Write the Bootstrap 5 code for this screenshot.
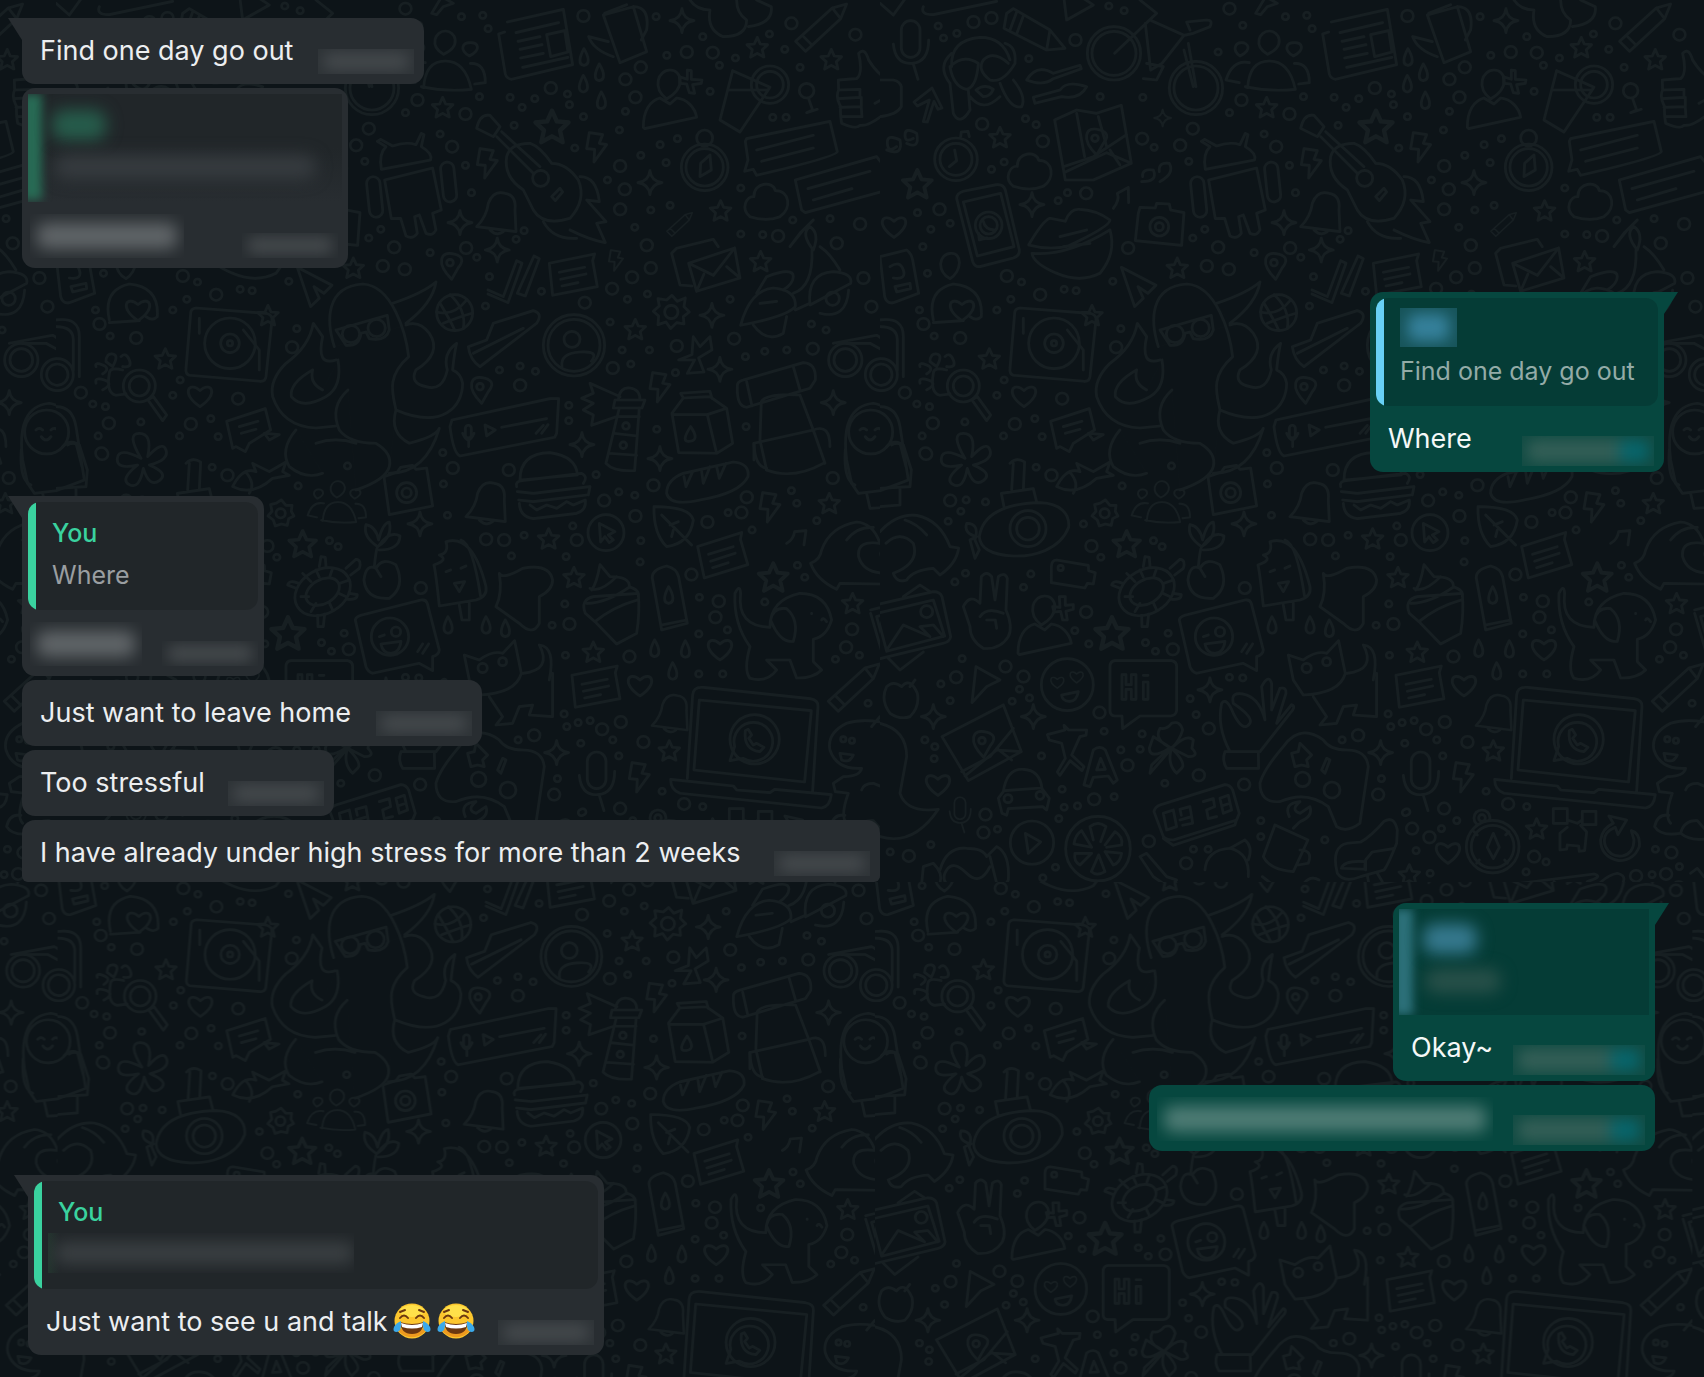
<!DOCTYPE html>
<html lang="en" data-bs-theme="dark">
<head>
<meta charset="utf-8">
<meta name="viewport" content="width=device-width, initial-scale=1">
<title>Chat</title>
<link href="https://cdn.jsdelivr.net/npm/bootstrap@5.3.0/dist/css/bootstrap.min.css" rel="stylesheet">
<style>
:root{--wall:#0d1418;--line:#171f22;--in:#282d31;--in-quote:#212629;--out:#06473f;--out-quote:#053c36}
body{background:var(--wall);font-family:Inter,"Liberation Sans",sans-serif;font-size:27px;line-height:38px;color:#eceef0}
.chat{min-height:100vh;padding:18px 40px 23px 22px}
.wallpaper{position:absolute;inset:0;width:100%;height:100%;z-index:-1}
.doodle{fill:none;stroke:var(--line);stroke-width:8;stroke-linecap:round;stroke-linejoin:round}
.solid{fill:var(--wall)}
.thread{gap:4px}
.thread + .thread{margin-top:24px}
.bubble{position:relative;border-radius:13px;background:var(--in);width:fit-content}
.bubble.sent{background:var(--out);color:#f4f8f7}
.bubble.tail::before{content:"";position:absolute;top:0;left:-14px;width:28px;height:22px;background:inherit;clip-path:polygon(0 0,100% 0,100% 100%,50% 100%)}
.bubble.sent.tail::before{left:auto;right:-14px;clip-path:polygon(0 0,100% 0,50% 100%,0 100%)}
.line{padding:10px 10px 10px 18px;min-height:66px;gap:20px}
.line p{margin:0 0 4px;white-space:nowrap}
.quoted{position:relative;padding:6px 6px 0}
.quoted blockquote{--bar:#3ad29f;margin:0;border-radius:12px;background:linear-gradient(90deg,var(--bar) 8px,var(--in-quote) 8px);height:108px;padding:10px 16px 14px 24px;font-size:25px;line-height:42px;white-space:nowrap;color:#9a9ea1;overflow:hidden}
.sent .quoted blockquote{--bar:#68d0f5;background:linear-gradient(90deg,var(--bar) 8px,var(--out-quote) 8px);color:#93aba7}
.who{color:#3ad29f;font-weight:500}
.smudge{display:block;position:relative;overflow:hidden;flex:none}
.smudge::before{content:"";position:absolute;inset:4px 5px;background:#44494c;filter:blur(7px);border-radius:8px}
.stamp{width:96px;height:25px;background:#2e3337}
.sent .stamp{width:132px;height:30px;margin-bottom:-4px;background:#114b43}
.sent .stamp::before{background:linear-gradient(90deg,#335e56 72%,#08656b 80%)}
.words{height:44px}
.words::before{inset:9px 7px;background:#606568;filter:blur(8px)}
.sent .words::before{background:#4f7c75}
.faint{height:40px;margin-left:-10px;background:linear-gradient(90deg,#24352f,var(--in-quote) 12px)}
.faint::before{background:#3a3f42;right:0}
.name-tag{width:57px;height:39px;margin-bottom:3px;background:#17545a}
.name-tag::before{background:#35809a;inset:6px 8px;filter:blur(7px)}
.gone{position:relative;overflow:hidden;height:108px;background:linear-gradient(var(--in-quote) 50%,var(--in))}
.sent .gone{height:106px;background:var(--out-quote)}
.gone::before{content:"";position:absolute;left:-6px;top:0;width:20px;height:106px;background:#286b55;filter:blur(5px)}
.sent .gone::before{background:#2c7079}
.gone-name{width:54px;height:30px;margin:16px 0 0 24px;background:#265c4b;filter:blur(8px);border-radius:12px}
.sent .gone-name{background:#35788d;margin-top:15px}
.gone-text{height:24px;margin:15px 26px 0 26px;background:#363b3f;filter:blur(8px);border-radius:12px}
.sent .gone-text{width:76px;background:#285049}
.face{width:40px;height:38px;vertical-align:-9px;margin-left:4px}
.cut{border-radius:13px 13px 6px 6px}
.cut .line{min-height:62px;padding-bottom:6px}
.w-a{width:402px}.w-b{width:326px}.w-c{width:294px}.w-d{width:242px}.w-e{width:460px}.w-f{width:312px}.w-g{width:858px}.w-h{width:262px}.w-i{width:506px}.w-j{width:576px}
.thread.later{margin-top:21px;padding-right:9px}
.thread.last{padding-left:6px}
</style>
</head>
<body>
<svg class="wallpaper" aria-hidden="true">
<defs>
<path id="star" d="M0-30 9-10 31-8 15 7 20 29 0 18-20 29-15 7-31-8-9-10Z"/>
<path id="spark" d="M0-36Q4-4 36 0Q4 4 0 36Q-4 4-36 0Q-4-4 0-36Z"/>
<path id="drop" d="M0-26C16 0 18 22 0 24C-18 22-14 0 0-26Z"/>
<path id="bolt" d="M-22-42 18-36 8-10 30-6-8 46-6 8-30 6Z"/>
<path id="heart" d="M0 30C-60-10-32-48 0-18C32-48 60-10 0 30Z"/>
<path id="cloud" d="M-50 44C-80 20-60-18-38-16C-40-60 20-64 26-34C70-34 76 20 40 44Q0 60-50 44Z"/>
<g id="people"><path d="M-65 55Q-60-25 0-25T78 60Q0 68-72 52ZM-5-45C-50-70-30-115 0-115S50-70-5-45ZM72-40C40-60 52-80 75-80S110-60 72-40ZM-88-40C-115-60-100-80-83-80S-48-60-88-40ZM75-18Q120-20 120 40L88 44M-60-20Q-110-30-130 32L-90 40"/></g>
<g id="person"><path d="M-10-25C-55-60-35-112 0-112S50-60-10-25ZM-80 60C-80 10-60-20-30-28L0-10 20-28C50-25 75 0 80 30L-76 64Z"/></g>
<g id="camera"><path d="M-68-48-28-62-18-76 18-82 28-70 60-74 78 40-52 66Z"/><circle r="30"/><circle r="14"/></g>
<g id="pin"><path d="M5 40Q-30 5-25-20T15-35T25 5Z"/><circle r="10" cy="-10"/></g>
<g id="bell"><path d="M-60 50Q-30 20-25-20Q-10-60 25-50Q60-45 55 0L58 65ZM-20 60Q0 80 20 65"/></g>
<g id="note"><path d="M-68-42 68-70 62-50 76 28-58 54ZM-38-15 38-30M-34 6 42-10M-30 26 18 16"/></g>
<g id="mic"><rect x="-28" y="-80" width="56" height="110" rx="28"/><path d="M-52-10Q-46 52 4 48T54-22M8 50 22 96"/></g>
<g id="crayon"><path d="M-75 40 35-60 78-72 60-28-45 70ZM-55 22-25 52M35-60 60-28"/></g>
<g id="paper"><path d="M-88-80 80-118 108 48-75 92Q-90 90-94 76L-114-44-96-50M-62-48 66-78M-56-22 10-36M-50 2 16-12M-48 28 20 14M-42 56 94 26M30-42 84-54 94 10 42 24Z"/></g>
<path id="beads" d="M174 78h1M190 114h1M230 100h1M446 176h1M732 32h1M686 18h1M1088 76h1M1014 156h1M788 292h1M660 290h1M1048 338h1M436 356h1M468 374h1M822 442h1M926 484h1M334 508h1M372 486h1M562 578h1M534 602h1M112 638h1M210 670h1M152 688h1M974 688h1M938 714h1M128 740h1M142 820h1M424 846h1M552 868h1M588 872h1M698 844h1M392 898h1M118 930h1M162 1008h1M350 930h1M722 986h1M372 1140h1M350 1186h1M110 1212h1M148 1220h1M254 1266h1M464 1256h1M486 1310h1M370 1308h1M126 1308h1M1216 50h1M1280 46h1M1296 86h1M1270 290h1M1362 292h1M1436 296h1M1398 322h1M1374 376h1M1152 402h1M1228 496h1M1246 578h1M1404 692h1M1380 718h1M1122 758h1M1262 772h1M1300 830h1M1288 918h1M1392 1098h1M1438 1114h1M1330 1110h1M1534 282h1M1540 314h1M1582 350h1M1556 444h1M1654 540h1M1690 390h1M1708 334h1M1800 50h1M1832 166h1M1940 110h1M1990 196h1M1962 274h1M2038 174h1M2140 102h1M2186 148h1M2232 202h1M2150 352h1M2190 352h1M1812 434h1M1754 466h1M1864 416h1M1830 488h1M1784 630h1M1842 616h1M1736 682h1M2054 564h1M2054 702h1M2120 704h1M2210 660h1M2322 656h1M1456 874h1M1714 898h1M1774 882h1M1662 966h1M1698 1050h1M1780 1050h1M2022 898h1M2266 972h1M2310 990h1M2126 1054h1M2192 1050h1M2068 1070h1M1858 1118h1M1724 1092h1M1538 1216h1M1538 1262h1M1802 1288h1M2070 1280h1M468 1402h1M726 1458h1M874 1398h1M258 1500h1M316 1506h1M204 1564h1M610 1572h1M242 1534h1M662 1672h1M846 1640h1M820 1622h1M256 1720h1M224 1746h1M452 1722h1M430 1762h1M584 1892h1M864 1900h1M796 1928h1M826 1954h1M626 1932h1M246 1976h1M182 2052h1M210 2102h1M396 2104h1M448 2094h1M418 2068h1M134 2220h1M164 2240h1M162 2276h1M672 2194h1M722 2250h1M786 2202h1M780 2248h1M484 2268h1M948 2144h1M930 2096h1M1048 2032h1M1088 2034h1M1386 2220h1M552 2422h1M592 2418h1M702 2390h1M546 2368h1M536 2456h1M352 2488h1M854 2350h1M1142 2462h1M152 2534h1M30 2556h1M526 2602h1M488 2634h1M684 2674h1M940 2548h1M984 2548h1M1162 1452h1M1174 1546h1M1404 1606h1M1366 1668h1M1160 1358h1M1620 1424h1M1688 1476h1M1736 1486h1M1550 1578h1M1530 1670h1M1754 1622h1M1752 1686h1M1526 1812h1M1488 1876h1M1930 1792h1M1928 1902h1M2014 1890h1M2126 1806h1M2206 1472h1M2222 1510h1M2016 1538h1M2088 1590h1M2282 1562h1M2246 1732h1M2224 1696h1M1528 1966h1M1928 2022h1M2000 2022h1M2338 1978h1M2410 1966h1M2436 2110h1M1532 2180h1M1566 2168h1M1602 2162h1M1524 2142h1M1670 2220h1M1574 2230h1M1688 2268h1M1496 2384h1M1576 2438h1M1818 2374h1M1504 2336h1M1580 2436h1M1684 2486h1M1334 2520h1M1142 2510h1M1608 2552h1M1730 2462h1M1998 2586h1M1938 2616h1M1650 2620h1M2326 2548h1M2398 2600h1M2316 2624h1M1940 2420h1M1280 2660h1M1440 2700h1"/>
<path id="pearls" d="M280 66h1M334 54h1M586 120h1M1048 26h1M1084 300h1M1228 342h1M938 386h1M786 416h1M900 436h1M1188 440h1M306 372h1M488 424h1M178 628h1M618 580h1M1014 742h1M744 744h1M1230 744h1M380 828h1M480 884h1M980 798h1M1046 808h1M130 972h1M240 1014h1M708 1042h1M74 1178h1M546 1196h1M158 1270h1M404 1272h1M1392 1156h1M136 1360h1M1484 264h1M1582 48h1M1754 202h1M1708 238h1M1738 292h1M1892 156h1M1970 158h1M2206 70h1M2398 104h1M1692 498h1M1706 568h1M1692 628h1M1772 736h1M1784 804h1M1668 866h1M1728 832h1M1586 908h1M2166 708h1M2342 730h1M2412 672h1M2422 834h1M2446 920h1M1862 1038h1M2034 1016h1M2270 1046h1M1670 1104h1M210 1502h1M138 1362h1M514 1426h1M634 1638h1M618 1836h1M1094 1764h1M878 1948h1M376 2000h1M228 2032h1M430 2030h1M658 2138h1M742 2296h1M986 2186h1M956 2326h1M1092 2354h1M642 2398h1M310 2498h1M316 2444h1M86 2568h1M806 2524h1M918 2590h1M1190 1404h1M1358 1410h1M1290 1618h1M1344 1620h1M1644 1502h1M1738 1548h1M1562 1620h1M1792 1456h1M2330 1434h1M2056 1538h1M2072 1492h1M1954 1566h1M1906 1724h1M1988 1804h1M1978 1852h1M1540 1872h1M1720 1970h1M2388 1888h1M2370 1942h1M1694 2166h1M1638 2188h1M1762 2226h1M1434 2206h1M1494 2384h1M1692 2426h1M1884 2412h1M1596 2486h1M1648 2512h1M1962 2570h1M2374 2558h1M2268 2628h1M2358 2622h1M2396 2662h1M1648 2690h1"/>

<pattern id="tile" x="56" width="824" height="900" patternUnits="userSpaceOnUse">
<g class="doodle" transform="translate(-56)">
<!-- upper half, first part -->
<g transform="translate(56) scale(.3333)">
<path d="M130 20Q120 45 160 44L350 4M550-20 560 60 640 15 600-12M0 10 40 45 80-10M-30 240H40Q60 244 64 260V320Q50 345 0 350"/>
<use href="#mic" x="92" y="142"/>
<path d="M380 40 400 26 510 90 555 145 500 150 372 85ZM410 36 390 90M430 48 410 102M510 90 500 150"/>
<path d="M215 200Q210 120 300 112Q370 112 390 180M215 160Q170 200 210 250L220 340Q240 380 270 330L265 270M375 130Q410 140 405 190Q370 250 330 240Q290 210 310 180Q340 150 385 190M400 240Q440 290 425 320Q390 330 360 250M210 200Q250 160 295 190Q290 260 260 268Q220 260 210 200M270 290Q310 340 360 290M288 270Q315 250 340 268Q330 290 310 290Z"/>
<path d="M440 240Q470 190 520 220L600 196 604 206 520 236Q490 260 440 240ZM460 292 540 270Q560 240 620 260Q600 300 545 290L465 310Z"/>
<circle cx="702" cy="160" r="80"/><circle cx="702" cy="160" r="66"/><circle cx="948" cy="264" r="80"/><circle cx="948" cy="264" r="66"/>
<path d="M704 160 830 40 780 0M810 60 912 106 940 100 990 80Q1000 60 980 60L920 66 930 90M912 106 846 190 812 210 796 70M925 130 948 260M912 150 940 260M800 190 850 200 830 240 790 236"/>
<path d="M130 365 148 300 112 318 102 306 156 264 186 324 174 328 162 304 142 366ZM20 450Q70 470 60 420Q20 400 22 430T50 440M80 430Q120 450 110 400Q75 380 75 405T100 415M785 545Q835 545 820 510Q785 505 788 530M840 545Q885 520 868 490Q835 485 838 515"/>
<circle cx="228" cy="478" r="64"/><circle cx="228" cy="478" r="48"/><path d="M224 450 230 482 208 500M242 410 244 396 264 394 268 410"/>
<use href="#cloud" x="450" y="515"/><path d="M524 360 590 330 650 340 724 316 754 490 640 540 556 540ZM550 500 640 470 740 404M556 516 680 458 754 490M690 450 720 495M590 340 614 470M655 350 680 440"/><use href="#pin" x="645" y="425"/>
<path d="M230 596Q230 580 250 574L350 554Q370 552 376 570L418 750Q420 768 400 774L300 800Q284 802 278 784ZM250 606 362 580 402 740 292 768Z"/><circle cx="326" cy="676" r="40"/><circle cx="326" cy="676" r="26"/><path d="M296 700 298 720 320 714M310 664Q315 690 345 690"/>
<path d="M446 735Q490 660 510 655L556 664Q570 625 600 628Q650 630 690 660Q690 680 560 740Q500 750 446 735ZM456 760Q560 770 690 690Q710 760 660 820Q600 850 530 820Q460 790 456 760ZM540 710 620 690M550 740 630 730"/>
<path d="M775 640 780 622 826 624 830 610 868 612 872 630 912 638 905 736 766 722Z"/><circle cx="838" cy="680" r="28"/><circle cx="838" cy="680" r="12"/>
<path d="M700 625Q720 600 712 580L745 562 746 608M976 508Q968 460 990 440L964 424 974 418 1010 438Q1050 424 1080 434L1096 400 1104 404 1096 440Q1130 460 1124 480ZM986 540 1130 504 1156 630 1130 640 1140 690Q1130 710 1110 700L1090 645 1076 650 1084 700Q1070 720 1050 708L1034 655 1006 656Z"/><rect x="936" y="530" width="40" height="122" rx="20" transform="rotate(-6 956 590)"/><rect x="1158" y="486" width="40" height="120" rx="20" transform="rotate(-6 1178 546)"/>
<path d="M0 770 80 750Q94 760 98 780L116 880 40 908Q20 912 14 890ZM30 800Q60 780 70 810T40 834M45 860 90 850 92 866 50 876ZM210 836C170 815 175 762 212 760S245 815 210 836ZM160 960Q140 870 220 852Q310 860 304 950Q290 965 270 950M160 968 250 962"/><use href="#heart" x="246" y="932"/>
<path d="M724 802 828 856 804 880 774 860 790 895 764 920ZM404 940Q404 926 420 924L630 940Q650 945 648 960L630 1130Q628 1145 612 1144L400 1126Q388 1122 390 1106Z"/><circle cx="522" cy="1030" r="76"/><circle cx="522" cy="1030" r="28"/><circle cx="522" cy="1030" r="8"/><path d="M562 990 610 1050 610 1110M430 955V1000"/>
<path class="solid" d="M835 1040C810 960 810 860 920 852C1010 856 1050 1000 1058 1070C990 1130 1010 1180 1020 1230C1160 1290 1220 1220 1220 1150Q1215 1120 1190 1110Q1195 1060 1202 1030Q1160 1060 1174 1110Q1160 1175 1110 1160Q1060 1150 1080 1110Q1160 1060 1120 1000Q1090 960 1050 975M1010 910Q1100 880 1140 846Q1130 910 1050 970M846 1080Q860 1160 810 1190Q740 1230 706 1190Q700 1150 770 1110Q760 1150 800 1170M840 1080Q780 1100 800 1010L772 970Q760 1040 690 1090Q640 1140 650 1190Q680 1280 780 1284L840 1278M876 1170Q820 1220 850 1290Q880 1330 960 1330Q1010 1360 1000 1400Q990 1440 900 1470M1020 1230Q1000 1300 1060 1330Q1140 1310 1150 1285Q1110 1420 1000 1420M720 1290Q670 1350 700 1400Q750 1440 800 1420M780 1330Q840 1310 900 1330"/>
<path d="M840 990 994 946 1000 990Q990 1026 940 1016L930 996 915 1000Q910 1040 870 1036Z"/><circle cx="885" cy="1002" r="26"/><circle cx="962" cy="984" r="26"/>
<path d="M0 960Q70 950 70 1010V1130M0 980Q52 980 52 1020V1110M0 1220Q50 1220 60 1280L85 1440 -20 1480M20 1340Q40 1320 60 1330L78 1400"/>
<circle cx="4" cy="1124" r="48"/><circle cx="4" cy="1124" r="32"/><circle cx="-28" cy="1296" r="66"/>
<circle cx="250" cy="1158" r="48"/><circle cx="250" cy="1158" r="30"/><path d="M276 1200 292 1190 332 1245 320 1262ZM200 1110Q160 1100 160 1120Q150 1180 180 1186L210 1182M150 1085Q150 1060 170 1062T170 1100ZM195 1070Q210 1055 220 1080T200 1100M120 1100Q115 1085 140 1095T140 1122M120 1150Q115 1130 145 1140T140 1170"/>
<use href="#heart" x="432" y="1190"/><path d="M512 1264 628 1226 644 1290 580 1330 568 1355 540 1340 530 1345ZM550 1280 606 1264M556 1300 600 1288M625 1300 670 1304 640 1320Z"/>
</g>
<!-- upper half, second part -->
<g transform="translate(400) scale(.3333)">
<path d="M95 40 125-10 160 10 130 20 110 44Z"/>
<use href="#people" x="136" y="208"/><use href="#paper" x="410" y="146"/>
<path d="M610 45 700 20 740 155 660 188ZM700 20Q750 20 740 90L724 120M625 125 566 110Q580 150 640 170M614 40 680 14M870 0Q890 30 930 30Q920 90 970 110Q1040 110 1040 60Q1010 40 1010 0M1045 80Q1120 70 1114 20L1070 0"/>
<use href="#crayon" x="1262" y="84"/><use href="#crayon" transform="translate(838 674) scale(.5)"/>
<path d="M1315 240Q1320 240 1370 236Q1390 220 1376 160Q1394 140 1406 180Q1430 220 1465 240L1466 330Q1410 380 1380 376Q1370 390 1325 370Q1320 340 1322 320Q1306 290 1316 270ZM1316 270 1380 268 1380 292 1316 296M1384 292V320L1320 322M1384 322 1386 350 1326 350M1425 310 1460 290M1466 240H1500M1466 330 1500 340"/>
<use href="#person" x="810" y="322"/><path d="M838 230 862 238 862 210 874 212 874 238 906 240 904 250 878 254 884 280 868 278 860 252 840 250ZM998 212 1110 262 1020 396 960 360ZM984 270H1102"/><circle cx="1110" cy="254" r="56"/><circle cx="1110" cy="254" r="40"/><circle cx="1220" cy="272" r="22"/><path d="M1226 296 1238 330 1220 338 1252 328"/>
<path d="M320 470Q310 530 370 570L400 630Q430 680 510 655Q560 600 535 540Q500 490 455 490Q420 440 390 430Q330 430 320 470ZM290 410 400 520M305 395 420 500M230 385Q240 340 270 346L300 380 280 410ZM455 590 480 565 488 576 466 602ZM540 530Q590 530 598 605L560 600 618 665 590 670 616 728Q570 720 510 690M430 665Q460 720 530 715"/><circle cx="422" cy="535" r="24"/>
<use href="#star" transform="translate(456 380) scale(1.6)"/><use href="#bolt" x="590" y="440"/><use href="#bolt" x="262" y="488"/>
<use href="#bell" x="290" y="630"/><circle cx="914" cy="502" r="70"/><circle cx="914" cy="502" r="56"/><circle cx="914" cy="414" r="24"/><path d="M930 465 934 510 900 530 902 490Z"/>
<path d="M1036 424 1040 416 1290 364 1312 455Q1310 470 1070 526L1060 508 1034 514 1044 480ZM1070 450 1240 406M1085 484 1240 444M1186 540 1430 470 1446 490 1454 524 1478 540 1456 552 1448 574 1216 638 1205 630ZM1224 566 1410 514M1240 600 1356 566"/>
<use href="#cloud" x="1100" y="606"/><path d="M815 760 830 745 940 718 955 740M815 760 840 855 876 858M866 790 1004 744 1020 834 890 874ZM866 790 940 826 1004 744M890 874 912 822M1020 834 980 800"/>
<use href="#note" x="516" y="832"/><path d="M264 870 310 890 350 782 366 790 324 908 264 882M352 880 402 768 418 776 376 888ZM1236 750Q1240 860 1180 880M1260 740Q1290 760 1320 810M1170 740 1200 700 1240 660 1210 690ZM1240 750Q1200 700 1230 680Q1260 700 1240 750ZM1022 976Q1050 870 1120 864Q1190 870 1186 920Q1160 950 1022 976ZM1070 880 1100 830Q1180 800 1180 830Q1180 850 1150 870M1230 915Q1220 820 1300 815Q1360 820 1352 850ZM1080 910 1130 904M1060 975Q1100 1030 1150 1000L1160 950M1260 940Q1340 960 1346 870M1186 930 1230 910"/><circle cx="1298" cy="896" r="20"/>
<use href="#bolt" transform="translate(648 780) scale(.7)"/><use href="#pin" x="150" y="798"/><use href="#pin" x="240" y="1170"/>
<circle cx="164" cy="938" r="54"/><path d="M110 936Q160 950 200 900M130 970Q180 950 216 940M150 884Q200 930 190 986M120 910Q150 960 164 990M205 1040 260 1020 280 970 400 932Q430 940 410 970L240 1100Q210 1080 205 1040ZM220 1060 370 985"/>
<circle cx="522" cy="1036" r="92"/><circle cx="522" cy="1036" r="78"/><circle cx="516" cy="1018" r="24"/><path d="M486 1100Q480 1060 540 1056T574 1084"/>
<path d="M800 900 816 886 832 904 856 894 852 920 868 936 850 950 852 972 830 968 812 986 798 966 774 974 776 948 760 934 778 918 774 896Z"/><circle cx="814" cy="936" r="20"/>
<path d="M836 1080 876 1064 880 1010 900 1040 930 1010 936 1050 896 1074 912 1116 862 1120 884 1080ZM1012 1160Q1010 1145 1030 1140L1210 1088Q1250 1090 1246 1140L1230 1165 1040 1222Q1010 1220 1012 1160ZM1040 1145 1056 1218M1180 1100 1200 1170M1080 1320 1084 1205Q1100 1180 1200 1185L1240 1290 1275 1390M1080 1320 1100 1410M1062 1380V1330L1240 1290Q1290 1270 1290 1340"/>
<circle cx="1336" cy="1080" r="50"/><circle cx="1336" cy="1080" r="34"/><circle cx="1444" cy="1124" r="48"/><circle cx="1444" cy="1124" r="32"/><path d="M1300 1030 1430 1006Q1460 1020 1466 1060L1410 1030 1340 1030"/>
<circle cx="1412" cy="1296" r="66"/><path d="M1355 1450 1340 1380Q1320 1220 1420 1210Q1480 1220 1500 1290M1380 1290Q1390 1280 1400 1290M1425 1290Q1435 1280 1445 1290M1396 1310Q1410 1330 1425 1310"/>
<path d="M150 1280 156 1260 450 1196 476 1196 470 1300 464 1312 180 1368Q160 1360 150 1280ZM255 1275 286 1290 260 1308ZM305 1282 440 1256M408 1300 430 1276M425 1300 444 1274"/><rect x="196" y="1276" width="18" height="38" rx="9"/><path d="M188 1300Q205 1340 222 1300M206 1320V1340"/>
<path d="M655 1200Q660 1160 690 1164T720 1200M645 1200H735L726 1224H640ZM658 1224 618 1390Q640 1415 704 1412L718 1224M650 1250H718M640 1300 712 1308M625 1360 710 1366M570 1150 660 1190M575 1276 655 1248M570 1150 580 1180 545 1195 580 1210 550 1230 580 1245 575 1276"/><use href="#bolt" x="780" y="1160"/><circle cx="678" cy="1278" r="10"/><circle cx="670" cy="1336" r="10"/>
<path d="M816 1240 850 1194 930 1190 980 1225 998 1330 950 1360 836 1358ZM816 1244H922L980 1225M922 1244 950 1360M850 1194 842 1180 930 1174 936 1195M872 1280Q900 1320 870 1324T872 1280"/>
</g>
<!-- lower half, first part -->
<g transform="translate(56 440) scale(.3333)">
<path d="M255 55Q210-20 250-20T275 50Q320 0 330 30T280 75Q340 100 310 122T262 85Q250 150 220 134T245 75Q180 90 184 55T255 55ZM35 15Q50 5 70 15L94 90 90 140 0 145M60 145V195L0 200M390 70Q410 50 434 66L430 150M400 70 395 150M364 160 460 146 470 186M364 160 372 200M298 290C310 210 400 190 480 188C540 190 570 220 566 262C540 330 460 350 400 348C340 345 300 330 298 290ZM290 290 270 300 285 355 298 330 285 300Q300 250 260 250Q250 280 290 290"/><circle cx="444" cy="266" r="54"/><circle cx="444" cy="266" r="34"/>
<path d="M530 140Q560 80 600 95L590 70 640 95 690 66 680 95 700 106 650 115Q590 170 530 140ZM568 95Q600 130 580 160"/>
<path d="M660 190 676 180 690 196 708 196 706 214 714 228 698 236 694 256 676 252 658 258 652 240 636 228 648 214 644 194Z"/><circle cx="674" cy="220" r="14"/><use href="#people" transform="translate(846 204) scale(.7)"/>
<use href="#camera" x="1052" y="158"/><use href="#bell" x="1290" y="180"/>
<path d="M0 275Q50 220 110 226Q180 240 210 320L236 324Q230 370 180 405L160 385Q100 390 80 420Q50 430 40 400Q120 370 100 310Q60 270 18 310M75 240Q110 250 140 285M514 380Q515 360 530 360L625 376 626 392 646 398 640 432 622 430 615 444 514 428Z"/><circle cx="542" cy="384" r="8"/>
<path d="M250 500Q270 460 300 490L304 410Q320 390 335 410L345 480 355 410Q375 395 382 415L378 510Q400 560 385 590Q360 630 310 625Q270 600 270 560ZM300 530Q320 500 370 520M320 540 346 540 350 565"/>
<use href="#person" x="494" y="580"/><path d="M518 500 540 502 538 470 556 470 556 496 580 494 580 508 558 514 562 540 548 540 542 514 522 516Z"/>
<g transform="rotate(-30 800 455)"><ellipse cx="800" cy="455" rx="88" ry="66"/><ellipse cx="800" cy="455" rx="54" ry="36"/></g><path d="M790 380 795 350 808 352 810 378M870 385 900 358Q918 360 910 385L884 405M720 445 695 435Q700 418 728 430M785 526 786 560 802 560 806 522M880 460 904 464Q904 480 876 478M740 400 765 425M735 470 758 470M765 515 780 490M830 510 820 488M870 470 848 460M880 420 852 430M830 385 822 408M780 390 790 412"/>
<path d="M960 385Q980 350 1020 375Q1050 440 1000 475Q930 480 924 420Q930 370 960 385L975 410M955 380Q960 330 965 320Q920 290 930 254Q960 260 968 300Q980 250 1000 246Q1010 290 968 318Q1000 270 1032 288Q1030 330 970 330"/>
<path d="M1170 305Q1250 280 1290 440Q1295 470 1260 480L1150 498Q1140 400 1134 375Q1180 360 1150 345Q1180 340 1170 305ZM1215 300Q1250 310 1274 470M1210 495 1218 540 1240 540 1240 490M1195 430 1226 425 1210 455ZM1170 395 1184 390M1215 385 1230 378M1330 400Q1340 420 1400 385Q1480 370 1490 420Q1490 450 1450 470L1450 550Q1430 590 1390 550L1320 500Q1340 460 1330 400Z"/>
<path d="M-10 494 160 455Q180 455 186 470L212 590Q210 605 190 610L0 656M-10 520 160 480 194 588 20 634ZM20 630 70 555 150 590 120 560 160 555 190 590M70 470 120 435 150 455M25 655 60 690 130 636"/><circle cx="140" cy="515" r="18"/>
<path d="M898 540Q900 530 915 526L1095 480Q1110 478 1114 490L1150 630Q1148 645 1130 650L1130 692 1090 670 950 700Q936 695 930 680Z"/><circle cx="1002" cy="590" r="56"/><circle cx="1020" cy="575" r="14"/><path d="M970 590 985 585M975 612 1035 604Q1030 640 1005 640T975 612ZM1085 635 1100 612M1100 640 1118 612"/>
<circle cx="562" cy="734" r="78"/><use href="#heart" transform="translate(532 728) scale(.55)"/><use href="#heart" transform="translate(590 712) scale(.55)"/><path d="M545 765 595 755Q590 785 568 784T545 765Z"/>
<path d="M704 662H874Q890 664 890 680V812Q888 826 872 828H780L728 866 726 828H704Q690 826 690 812V680Q690 664 704 662ZM726 704H738V734H754V704H768V778H754V748H738V778H726ZM790 726H804V778H790ZM790 706H804"/>
<path d="M65 740Q90 710 112 760Q120 800 90 830Q60 840 30 820Q0 780 20 740Q40 720 65 740ZM90 740 105 720M288 680 360 720 320 740 276 788ZM186 890 370 795 424 935 265 1022ZM245 995 330 950 400 865M255 1008 350 930 424 935M350 925 395 960"/><use href="#pin" x="306" y="912"/>
<path d="M502 884 555 870 552 856 566 870 620 870 618 886 600 890 575 945 612 980 606 992 570 962 540 1006 532 996 556 955 545 910 508 900ZM612 1035 640 930Q660 915 676 930L712 1020 700 1030 685 1008 640 1012 630 1040ZM650 990 676 988 662 955Z"/>
<path d="M875 925Q820 900 840 865Q860 870 875 850Q900 840 908 870Q900 900 875 925Q920 880 940 900L936 925Q960 950 925 950L875 925Q920 970 905 985L890 1000Q860 970 875 925L810 1000 815 975 868 925Q810 960 808 925L820 890Z"/>
<path d="M1050 935Q1010 860 1025 790Q1040 770 1060 820Q1090 880 1110 850Q1120 830 1060 790Q1050 750 1100 765Q1140 780 1155 840L1145 740Q1165 700 1175 730V810L1200 745Q1220 740 1218 760L1190 850 1235 794Q1250 800 1230 820L1140 935ZM1035 935H1135L1136 985H1040Q1025 960 1035 935Z"/>
<path d="M1225 645 1270 660Q1310 630 1340 640L1376 602 1396 700Q1380 760 1270 765L1240 720ZM1300 770 1340 830 1320 855 1370 850 1390 800 1430 795 1420 825 1490 830V700M1400 700Q1490 690 1450 615Q1500 620 1480 720"/><circle cx="1280" cy="684" r="14"/><circle cx="1340" cy="665" r="12"/>
<path d="M1140 1030Q1150 990 1210 920Q1260 850 1330 900Q1350 930 1400 930Q1460 930 1465 980L1440 1150Q1400 1180 1370 1160L1345 1100Q1280 1050 1200 1085Q1140 1090 1140 1030ZM1235 940 1255 935 1260 910 1280 930 1295 945 1280 960 1285 980 1265 975 1245 980ZM1325 990 1340 955 1350 960 1335 1000Z"/><circle cx="1268" cy="1018" r="22"/><circle cx="1356" cy="1050" r="24"/>
<path d="M0 850Q80 870 80 950L60 1060Q80 1120 175 1108Q100 1220 0 1190"/><use href="#heart" x="174" y="1036"/><use href="#mic" transform="translate(240 1120) scale(.6)"/>
<path d="M370 1055Q380 985 430 988Q480 990 486 1046L508 1075 500 1110 488 1100 385 1106 380 1126 366 1120 355 1075ZM374 1052 484 1044"/><circle cx="384" cy="1076" r="12"/><circle cx="480" cy="1066" r="12"/>
<circle cx="456" cy="1208" r="65"/><path d="M436 1180 482 1206 445 1240Z"/><circle cx="654" cy="1226" r="97"/><path d="M640 1200 630 1160Q654 1140 678 1160L662 1205M675 1215 705 1175Q730 1190 725 1215L680 1222M675 1235 725 1240Q720 1270 700 1275ZM656 1245 675 1295Q650 1310 634 1295ZM635 1240 600 1275Q580 1265 585 1240ZM635 1222 582 1212Q585 1185 605 1172Z"/>
<path d="M822 1115Q825 1100 840 1095L1035 1034Q1050 1034 1058 1050L1078 1120 1070 1140 880 1200Q860 1200 850 1190ZM850 1195 880 1216 1065 1155 1070 1138M850 1120 880 1110 890 1160 860 1170ZM900 1140 935 1130 930 1100 900 1108 904 1126M935 1130 938 1150 908 1156M970 1085 1000 1076 1004 1100 980 1110 985 1136 1010 1130M1020 1075 1045 1066 1055 1110 1030 1120ZM1025 1098 1050 1090"/>
<path d="M1228 1130Q1210 1090 1260 1085Q1230 1110 1260 1120L1290 1100Q1300 1130 1260 1145L1240 1165M1185 1155 1284 1200 1240 1295Q1170 1290 1150 1250ZM1260 1230Q1300 1230 1285 1270L1255 1275M975 1290Q980 1230 1050 1225Q1110 1240 1105 1310M1050 1225Q1060 1220 1095 1200Q1120 1220 1105 1260M780 1250 800 1240 860 1310 890 1320 870 1345 820 1310ZM125 1330 130 1280 160 1270Q190 1300 180 1330M180 1290Q200 1220 260 1225Q310 1225 320 1250L350 1220Q390 1240 385 1320L370 1345 350 1330 330 1250M210 1340Q180 1320 200 1290T260 1300T330 1280"/>
</g>
<!-- lower half, second part -->
<g transform="translate(400 440) scale(.3333)">
<path d="M360 120Q360 40 450 38Q530 50 532 105ZM350 140Q345 125 365 122L545 100Q565 110 550 130M352 155 400 160 570 140 565 165M356 180 400 185 560 165M358 190Q360 230 400 236L530 220Q560 210 556 180L520 195 500 185 470 205 440 195 410 210 390 195"/>
<path d="M800 160Q800 120 850 100L1000 66Q1050 70 1044 110Q1020 160 900 180Q810 200 800 160ZM852 110 858 140 878 95M905 95 910 130 930 80M950 80 958 115 978 70M1100 90Q1180 120 1270 70M1062 10Q1064 80 1100 85M1336 30Q1330 120 1365 135M1355 130 1375 160 1500 145M1400 160 1410 205 1500 200"/>
<circle cx="618" cy="278" r="54"/><path d="M598 250 645 275 625 285 640 300 628 308 615 290 602 306ZM762 200Q870 200 880 240Q870 310 800 320Q760 280 762 200ZM785 225 875 315M810 255 835 245M820 270 815 290"/><use href="#note" x="965" y="354" transform="rotate(-6 965 354)"/>
<use href="#bolt" x="1110" y="200"/><path d="M1160 310Q1180 300 1184 275L1218 272 1212 315M1232 370Q1260 360 1265 330Q1290 260 1370 246Q1420 250 1440 310Q1370 300 1376 350Q1390 400 1460 400Q1480 430 1440 432L1320 430 1310 448Q1250 420 1232 370ZM1340 300Q1370 260 1420 262"/><use href="#heart" transform="translate(1462 350) scale(.6)"/>
<path d="M580 470Q540 480 556 520L585 545 650 612 710 580Q720 520 715 460ZM585 545Q640 500 712 480M575 450Q590 430 600 374L630 410Q690 410 688 440Q720 450 715 470M570 445Q600 460 650 410M560 490Q620 490 690 440M758 420Q750 390 800 378Q830 385 836 410L862 550 785 570ZM785 555 860 540"/><use href="#drop" x="806" y="466"/>
<path d="M1005 460Q1020 430 1022 460Q1010 560 1110 562Q1110 480 1200 460Q1280 460 1295 540Q1280 590 1240 598L1240 665 1265 690Q1240 715 1190 714L1170 660 1100 660 1130 690Q1100 730 1050 715Q1030 690 1050 620Q1000 550 1005 460ZM1112 540Q1120 500 1160 506Q1200 540 1180 604Q1140 610 1112 540M1235 520V521M1265 540Q1270 530 1280 545"/>
<path d="M1412 510 1500 488M1412 520 1450 650 1500 665M1430 530 1500 510M1430 530 1460 640 1500 620"/>
<use href="#note" x="584" y="748"/><use href="#heart" x="720" y="738"/><use href="#heart" x="960" y="630"/><use href="#bell" transform="translate(810 812) scale(.9)"/>
<path d="M878 765Q880 740 910 742L1230 776Q1256 780 1254 800L1238 1054M878 765 862 1015M898 780 1234 812 1214 1026 882 990ZM812 1018 1000 1038 1010 1050 1110 1058 1124 1048 1294 1064Q1290 1100 1265 1104L840 1060Q812 1050 812 1018Z"/><circle cx="1064" cy="898" r="74"/><path d="M1004 920 990 962 1030 955A58 58 0 1 0 1004 920ZM1036 872Q1030 930 1080 935L1092 922 1070 910 1060 915 1046 895 1055 885 1045 868Z"/>
<use href="#crayon" x="1360" y="744"/><path d="M1500 860Q1400 830 1340 850Q1280 880 1290 930Q1310 990 1385 985Q1380 1010 1330 1010L1300 1030 1306 1055 1345 1060Q1320 1130 1340 1150M1385 1050Q1390 1030 1420 1030L1470 1050M1320 940 1360 945Q1350 970 1325 960ZM1415 860 1440 830 1460 860 1480 850"/><circle cx="1330" cy="898" r="8"/><circle cx="1356" cy="902" r="8"/>
<use href="#mic" x="590" y="1016"/><use href="#bolt" x="718" y="1010"/>
<g transform="translate(0 900)"><circle cx="774" cy="234" r="24"/><circle cx="774" cy="234" r="10"/><circle class="solid" cx="806" cy="320" r="79"/><circle cx="806" cy="320" r="64"/><path d="M808 280 826 322 808 356 790 322ZM750 275 760 285M855 275 845 285M758 370 766 360M850 370 842 360"/>
<path d="M988 206H1030V250H988ZM1075 214H1116V254H1075ZM1030 240 1060 250 1075 240M1030 262 1008 280V330L1028 328 1030 315 1064 318 1066 334 1082 332 1088 276 1070 256M1155 228 1208 240 1182 284 1174 262Q1130 280 1145 320Q1160 352 1195 348Q1230 340 1230 300L1222 272Q1250 280 1246 320Q1230 362 1184 362Q1130 350 1130 300Q1135 265 1168 250ZM1335 226Q1300 220 1292 260Q1310 290 1370 280Q1380 240 1420 242L1445 270M1370 280Q1400 305 1450 296M340 400Q320 320 370 310L410 306Q440 290 480 244Q510 226 520 270L518 310Q490 380 480 390L410 410Q360 430 340 400ZM425 390V360L445 336 508 326M352 385Q360 360 424 365L422 388ZM430 405 445 495 570 470 560 430M460 400 475 425M470 440 520 430M460 460 525 450M252 480 300 500 328 435M330 495 355 430 380 436 345 505M115 410 160 445M240 430Q260 405 285 420M0 480 90 455 30 510M805 430 830 465 860 470 890 430 1110 402Q1140 410 1090 425L1055 480M850 430 865 465 980 450Q1010 440 990 425M1090 480Q1130 410 1180 400Q1220 410 1180 450L1110 485M1215 480Q1240 430 1310 430L1330 450 1320 480M1400 400 1420 385 1440 410"/><use href="#heart" x="672" y="340"/><use href="#star" x="938" y="266"/><use href="#star" x="556" y="404"/></g>
</g>
<!-- stars, sparkles and droplets between the drawings -->
<g transform="translate(56) scale(.3333)">
<g><use href="#star" x="1160" y="322"/><use href="#star" x="360" y="412"/><use href="#star" transform="translate(112 552) scale(1.4)"/><use href="#star" x="892" y="804"/><use href="#star" x="636" y="946"/><use href="#star" x="328" y="1076"/><use href="#spark" transform="translate(848 354) scale(.7)"/><use href="#spark" x="456" y="614"/><use href="#heart" x="42" y="682"/></g>
<g transform="translate(1032)"><use href="#star" x="1072" y="142"/><use href="#star" x="1294" y="178"/><use href="#star" x="962" y="632"/><use href="#star" x="1082" y="784"/><use href="#star" x="706" y="988"/><use href="#spark" x="846" y="62"/><use href="#spark" x="750" y="548"/><use href="#spark" x="180" y="668"/><use href="#spark" x="292" y="750"/><use href="#spark" x="936" y="946"/><use href="#spark" x="960" y="1108"/><use href="#spark" x="1300" y="1208"/><use href="#spark" x="546" y="1334"/><use href="#drop" x="552" y="172"/><use href="#drop" x="598" y="218"/><use href="#drop" x="550" y="252"/><use href="#drop" x="604" y="302"/></g>
<g transform="translate(0 1320)"><use href="#star" transform="translate(740 312) scale(1.3)"/><use href="#star" transform="translate(696 580) scale(1.6)"/><use href="#spark" x="1092" y="252"/><use href="#spark" x="160" y="830"/><use href="#spark" x="460" y="830"/><use href="#spark" x="990" y="750"/><use href="#drop" x="1176" y="556"/><use href="#drop" x="1290" y="556"/><use href="#drop" x="1348" y="566"/></g>
<g transform="translate(1032 1320)"><use href="#star" x="446" y="296"/><use href="#star" x="522" y="412"/><use href="#star" x="580" y="636"/><use href="#star" x="1288" y="190"/><use href="#star" transform="translate(1120 412) scale(1.4)"/><use href="#star" x="1358" y="490"/><use href="#star" x="808" y="932"/><use href="#spark" x="470" y="938"/><use href="#spark" x="780" y="56"/><use href="#drop" x="764" y="626"/><use href="#drop" x="856" y="628"/><use href="#drop" x="818" y="694"/></g>
</g>
<g transform="translate(56) scale(.3333)">
<use href="#beads" stroke-width="26"/><use href="#beads" stroke="#0d1418" stroke-width="11"/>
<use href="#pearls" stroke-width="42"/><use href="#pearls" stroke="#0d1418" stroke-width="27"/>
</g>
</g>
</pattern>
<pattern id="tileLower" href="#tile" patternTransform="matrix(.992 0 0 .98 2 618)"/>
</defs>
<rect width="100%" height="882" fill="url(#tile)"/>
<rect y="882" width="100%" height="100%" fill="url(#tileLower)"/>
<symbol id="joy" viewBox="0 0 38 38"><circle cx="19" cy="19" r="17.500" fill="#fcc62d"/><path d="M2 22A17.500 17.500 0 0 0 36 22Q19 38 2 22Z" fill="#ee9a1f"/><ellipse cx="19" cy="9" rx="12" ry="6" fill="#ffe04a"/><path d="M7 20Q19 24 31 20Q30 32 19 32T7 20Z" fill="#6b3710"/><path d="M8 21Q19 25 30 21L29 25Q19 28 9 25Z" fill="#fff"/><path d="M7 16Q11 11 15 16M23 16Q27 11 31 16M7 10 12 8M31 10 26 8" fill="none" stroke="#6b3710" stroke-width="2" stroke-linecap="round"/><path d="M8 19Q9 29 4 30Q-1 30 1 25Q3 21 8 19ZM30 19Q29 29 34 30Q39 30 37 25Q35 21 30 19Z" fill="#3ba9ea"/></symbol>
</svg>

<main class="chat d-flex flex-column">
<section class="thread d-flex flex-column align-items-start">
  <article class="bubble tail w-a"><div class="line d-flex justify-content-between align-items-end"><p>Find one day go out</p><span class="smudge stamp"></span></div></article>
  <article class="bubble w-b"><div class="quoted"><div class="gone"><div class="gone-name"></div><div class="gone-text"></div></div></div><div class="line d-flex justify-content-between align-items-end ps-2"><span class="smudge words col-6"></span><span class="smudge stamp bg-transparent"></span></div></article>
</section>
<section class="thread d-flex flex-column align-items-end">
  <article class="bubble sent tail w-c"><div class="quoted"><blockquote><span class="smudge name-tag"></span>Find one day go out</blockquote></div><div class="line d-flex justify-content-between align-items-end"><p>Where</p><span class="smudge stamp"></span></div></article>
</section>
<section class="thread d-flex flex-column align-items-start">
  <article class="bubble tail w-d"><div class="quoted"><blockquote><div class="who">You</div>Where</blockquote></div><div class="line d-flex justify-content-between align-items-end ps-2"><span class="smudge words col-6"></span><span class="smudge stamp bg-transparent"></span></div></article>
  <article class="bubble w-e"><div class="line d-flex justify-content-between align-items-end"><p>Just want to leave home</p><span class="smudge stamp"></span></div></article>
  <article class="bubble w-f"><div class="line d-flex justify-content-between align-items-end"><p>Too stressful</p><span class="smudge stamp"></span></div></article>
  <article class="bubble cut w-g"><div class="line d-flex justify-content-between align-items-end"><p>I have already under high stress for more than 2 weeks</p><span class="smudge stamp"></span></div></article>
</section>
<section class="thread later d-flex flex-column align-items-end">
  <article class="bubble sent tail w-h"><div class="quoted"><div class="gone"><div class="gone-name"></div><div class="gone-text"></div></div></div><div class="line d-flex justify-content-between align-items-end"><p>Okay~</p><span class="smudge stamp"></span></div></article>
  <article class="bubble sent w-i"><div class="line d-flex justify-content-between align-items-end ps-2"><span class="smudge words flex-fill"></span><span class="smudge stamp"></span></div></article>
</section>
<section class="thread last d-flex flex-column align-items-start">
  <article class="bubble tail w-j"><div class="quoted"><blockquote><div class="who">You</div><span class="smudge words faint col-7"></span></blockquote></div><div class="line d-flex justify-content-between align-items-end"><p>Just want to see u and talk<svg class="face" role="img" aria-label="face with tears of joy"><use href="#joy"/></svg><svg class="face" role="img" aria-label="face with tears of joy"><use href="#joy"/></svg></p><span class="smudge stamp"></span></div></article>
</section>
</main>
<script src="https://cdn.jsdelivr.net/npm/bootstrap@5.3.0/dist/js/bootstrap.bundle.min.js"></script>
</body>
</html>
